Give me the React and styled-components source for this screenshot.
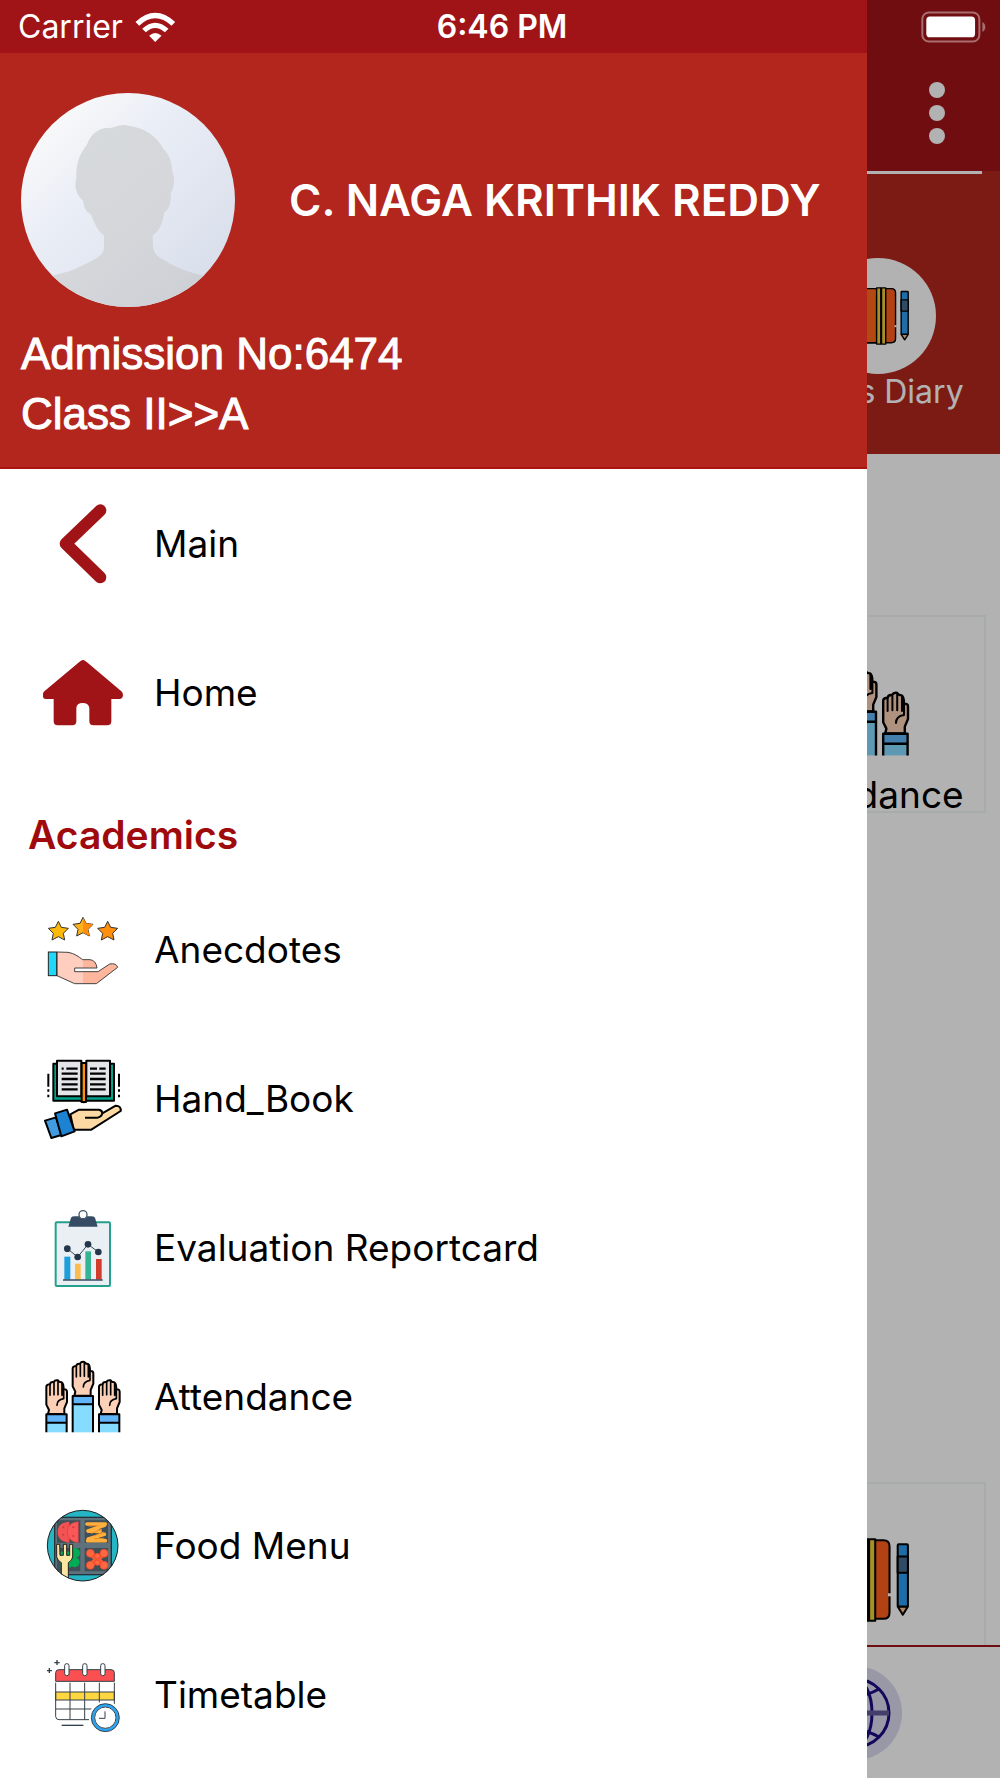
import styled, { createGlobalStyle } from "styled-components";

// every menu icon is drawn on a 240 x 240 grid
const BackIcon = () => (
    <svg viewBox="69 72 240 240" fill="none" stroke="#a01417" strokeWidth="36" strokeLinejoin="round" strokeLinecap="round">
        <path d="M241 91 L137 191 L241 292" />
    </svg>
);

const HomeIcon = () => (
    <svg viewBox="69 519 240 240" fill="#a01417">
        <path d="M189 540 C193 540 197 543 201 547 L304 634 C311 640 311 657 300 657 L274 657 L274 724 Q274 736 262 736 L220 736 Q208 736 208 724 L208 684 Q206 669 188 669 Q170 669 169 684 L169 724 Q169 736 157 736 L113 736 Q101 736 101 724 L101 657 L77 657 C66 657 66 640 73 634 L177 547 C181 543 185 540 189 540 Z" />
    </svg>
);

const Star = ({ x, y, fill }) => (
    <path
        transform={`translate(${x} ${y})`}
        d="M0 -28 L9 -10 L30 -7 L15 8 L19 28 L0 18 L-19 28 L-15 8 L-30 -7 L-9 -10 Z"
        fill={fill}
        stroke="#333"
        strokeWidth="3"
        strokeLinejoin="round"
    />
);

const AnecdotesIcon = () => (
    <svg viewBox="69 57 240 240">
        <Star x={115} y={119} fill="#fcb90a" />
        <Star x={189} y={107} fill="#fcb11c" />
        <path d="M189 79 L198 97 L219 100 L204 115 L208 135 L189 125 Z" fill="#ff8f0c" />
        <Star x={263} y={119} fill="#ff8f0c" />
        <path d="M111 183 L144 184 C163 187 174 196 188 206 L210 206 Q228 208 231 231 L164 231 L164 242 L234 242 L269 219 Q288 215 293 229 L229 278 L164 278 L111 254 Z" fill="#ffcebf" />
        <path d="M189 206 L210 206 Q228 208 231 231 L189 231 Z M189 242 L234 242 L269 219 Q288 215 293 229 L229 278 L189 278 Z" fill="#ffb69c" />
        <path d="M111 183 L144 184 C163 187 174 196 188 206 L210 206 Q228 208 231 231 L164 231 L164 242 L234 242 L269 219 Q288 215 293 229 L229 278 L164 278 L111 254 Z" fill="none" stroke="#444" strokeWidth="3" strokeLinejoin="round" />
        <rect x="85" y="183" width="25" height="71" fill="#1fd7f8" stroke="#222" strokeWidth="3" />
    </svg>
);

const HandBookIcon = () => (
    <svg viewBox="69 504 240 240" stroke="#000" strokeWidth="6" strokeLinejoin="round">
        <path d="M100 518 L282 518 L282 629 L203 629 L191 634 L179 629 L100 629 Z" fill="#00a389" />
        <rect x="111" y="509" width="73" height="107" fill="#e4e5e9" />
        <rect x="199" y="509" width="71" height="107" fill="#e4e5e9" />
        <rect x="185" y="516" width="13" height="117" fill="#ff8f0c" />
        <g fill="none" strokeWidth="7">
            <path d="M125 533 H131 M139 533 H173 M125 548 H173 M125 564 H173 M125 580 H173 M125 595 H173" />
            <path d="M210 533 H231 M238 533 H257 M210 548 H257 M210 564 H257 M210 580 H257 M210 595 H257" />
            <path d="M85 548 V587 M85 595 V602 M85 611 V619 M297 548 V587 M297 595 V602 M297 611 V619" strokeWidth="6" />
        </g>
        <path d="M151 670 L177 656 L237 656 Q247 658 247 667 L287 644 Q304 645 302 660 L214 716 L161 716 Z" fill="#ffd9a3" />
        <path d="M195 680 H232 Q244 679 247 667" fill="none" />
        <path d="M75 689 L108 679 L124 732 L94 741 Z" fill="#419be0" />
        <path d="M105 667 L141 656 L164 721 L124 736 Z" fill="#1c82d2" />
    </svg>
);

const ReportIcon = () => (
    <svg viewBox="69 51 240 240">
        <rect x="107" y="94" width="163" height="191" rx="3" fill="#eaeff3" stroke="#25a08e" strokeWidth="6" />
        <path d="M145 107 L153 80 Q156 76 164 76 L213 76 Q222 76 225 80 L233 107 Z" fill="#364c62" />
        <circle cx="189" cy="71" r="12" fill="#fff" stroke="#40566c" strokeWidth="4" />
        <rect x="133" y="197" width="18" height="69" fill="#209edb" />
        <rect x="165" y="218" width="17" height="48" fill="#fbbc4d" />
        <rect x="196" y="181" width="17" height="85" fill="#35b493" />
        <rect x="228" y="204" width="17" height="62" fill="#d23d2b" />
        <path d="M129 267 H248" stroke="#394b61" strokeWidth="4" />
        <path d="M142 173 L173 198 L204 160 L235 183" fill="none" stroke="#394b61" strokeWidth="3" />
        <g fill="#24364c">
            <circle cx="142" cy="173" r="10" />
            <circle cx="173" cy="198" r="10" />
            <circle cx="204" cy="160" r="10" />
            <circle cx="235" cy="183" r="10" />
        </g>
    </svg>
);

const RaisedHand = ({ x = 0, y = 0, arm = 54 }) => (
    <g transform={`translate(${x} ${y})`} stroke="#000" strokeWidth="6" strokeLinecap="round" strokeLinejoin="round">
        <path d="M242 672 L245 660 L237 644 L237 589 Q239 583 248 583 Q249 575 259 576 Q263 569 272 571 Q275 577 283 577 Q289 580 289 598 Q299 597 299 605 L299 636 L291 655 L291 672 Z" fill="#fbd0b6" />
        <path d="M248 585 V616 M260 578 V614 M272 574 V614 M284 580 V616 M289 598 V614 M289 614 V626 Q269 629 269 646" fill="none" strokeWidth="5" />
        <rect x="237" y="673" width="61" height={arm} fill="#86dcff" stroke="none" />
        <rect x="237" y="673" width="61" height="25" fill="#62b5f8" stroke="none" />
        <path d={`M237 ${673 + arm} V673 H298 V${673 + arm} M237 698 H298`} fill="none" strokeLinecap="butt" />
    </g>
);

const HandsIcon = () => (
    <svg viewBox="69 501 240 240">
        <RaisedHand x={-158} />
        <RaisedHand x={-79} y={-55} arm={109} />
        <RaisedHand />
    </svg>
);

const FoodIcon = () => (
    <svg viewBox="69 48 240 240">
        <clipPath id="plate">
            <circle cx="188" cy="167" r="107" />
        </clipPath>
        <g clipPath="url(#plate)">
            <circle cx="188" cy="167" r="107" fill="#25b5c5" />
            <rect x="104" y="82" width="170" height="172" fill="#5f727c" stroke="#25323a" strokeWidth="4" />
            <path d="M111 91 H181 V158 H111 Z M194 91 H264 V158 H194 Z M111 174 H181 V244 H111 Z M194 174 H264 V244 H194 Z" fill="#404f57" />
            <path d="M148 95 Q113 97 113 126 Q113 155 148 158 Z" fill="#f35252" />
            <path d="M175 95 Q142 97 142 126 Q142 155 175 158 Z" fill="#fa5757" stroke="#c94147" strokeWidth="2" />
            <g fill="#c63942">
                <circle cx="130" cy="112" r="3" />
                <circle cx="130" cy="134" r="3" />
                <circle cx="160" cy="112" r="3" />
                <circle cx="160" cy="138" r="3" />
            </g>
            <g stroke="#ffaf3c" strokeWidth="11" strokeLinecap="round">
                <path d="M201 102 L256 102 M253 106 L204 123 M205 123 L240 124 M253 133 L205 147 M203 152 L256 152" />
            </g>
            <path d="M206 108 L236 107 M214 130 L246 118 M222 138 L251 126 M222 146 L251 145" stroke="#ef8e27" strokeWidth="3" />
            <g fill="#00ad55">
                <circle cx="165" cy="189" r="15" />
                <circle cx="164" cy="217" r="15" />
                <circle cx="146" cy="202" r="13" />
                <rect x="122" y="185" width="32" height="47" />
            </g>
            <path d="M211 190 L252 226 M252 190 L211 226" stroke="#fa5a35" strokeWidth="16" />
            <g fill="#ff6740" stroke="#e7472e" strokeWidth="2">
                <circle cx="211" cy="190" r="12" />
                <circle cx="252" cy="190" r="12" />
                <circle cx="211" cy="226" r="12" />
                <circle cx="252" cy="226" r="12" />
                <circle cx="232" cy="198" r="8" />
                <circle cx="232" cy="218" r="8" />
            </g>
            <path d="M110 163 L119 163 L120 196 L130 196 L130 163 L140 163 L140 196 L149 196 L149 163 L158 163 L158 201 Q157 211 145 218 L145 280 L124 280 L124 218 Q112 211 110 201 Z" fill="#fde5a2" stroke="#222" strokeWidth="3" strokeLinejoin="round" />
        </g>
        <circle cx="188" cy="167" r="106" fill="none" stroke="#222" strokeWidth="3" />
    </svg>
);

const TimetableIcon = () => (
    <svg viewBox="69 495 240 240" fill="none" stroke="#343f48" strokeWidth="3">
        <path d="M111 510 V525 M103 518 H119 M88 534 V549 M81 542 H96" strokeWidth="4" />
        <path d="M107 574 V548 Q107 539 117 539 H273 Q283 539 283 548 V574 Z" fill="#fb4f52" />
        <rect x="107" y="606" width="176" height="24" fill="#fdd640" />
        <path d="M107 578 V680 Q108 689 117 689 H209 M283 578 V642 M150 578 V689 M194 578 V689 M238 578 V644 M107 657 H222" />
        <path d="M125 706 H190" strokeWidth="4" />
        <g fill="#fff" strokeWidth="3">
            <rect x="134" y="521" width="13" height="36" rx="6" />
            <rect x="188" y="521" width="13" height="36" rx="6" />
            <rect x="242" y="521" width="13" height="36" rx="6" />
        </g>
        <circle cx="256" cy="683" r="47" fill="#fff" stroke="#fff" strokeWidth="5" />
        <circle cx="256" cy="683" r="37" stroke="#2aa5f5" strokeWidth="9" />
        <circle cx="256" cy="683" r="42" />
        <circle cx="256" cy="683" r="32" />
        <path d="M255 664 V685 H237" />
    </svg>
);

const DiaryIcon = () => (
    <svg viewBox="0 0 94 94" stroke="#000" strokeWidth="2" strokeLinejoin="round">
        <path d="M8 8 H66 Q72 8 72 14 V79 Q72 85 66 85 H8 Z" fill="#ff5f1c" />
        <path d="M8 8 H45 V85 H8 Z" fill="#ff691c" stroke="none" />
        <path d="M8 8 H45 M8 85 H45" />
        <rect x="45" y="7" width="6" height="80" fill="#f0cf3d" />
        <rect x="52" y="7" width="6" height="80" fill="#f0cf3d" />
        <path d="M72 60 V63" stroke="#fff" strokeWidth="3" />
        <path d="M80 73 L85 81 L90 73 Z" fill="#ffc194" />
        <rect x="80" y="12" width="10" height="61" rx="1" fill="#2b9bf1" />
        <rect x="80" y="24" width="10" height="16" fill="#466e90" />
    </svg>
);

const GlobeIcon = () => (
    <svg viewBox="0 0 94 94" fill="none" stroke="#1d0b83" strokeWidth="3">
        <circle cx="47" cy="47" r="47" fill="#dadaf0" stroke="none" />
        <circle cx="47" cy="47" r="34" />
        <ellipse cx="47" cy="47" rx="17" ry="34" />
        <path d="M47 13 V81" />
        <path d="M13 47 H81" stroke="#625a9d" strokeWidth="5" />
        <path d="M23 23 Q47 37 71 23 M23 71 Q47 57 71 71" />
    </svg>
);

const WifiIcon = () => (
    <svg viewBox="398 36 122 90" width="41" height="30" fill="#fff">
        <path d="M399 66 Q458 11 518 66 L507 77 Q458 33 410 77 Z" />
        <path d="M419 86 Q458 50 498 86 L487 97 Q458 71 430 97 Z" />
        <path d="M440 107 Q458 91 477 107 L458 126 Z" />
    </svg>
);

const BatteryIcon = () => (
    <svg viewBox="1322 30 196 96" width="65" height="32">
        <rect x="1326" y="34" width="172" height="88" rx="20" fill="none" stroke="#fff" strokeOpacity=".4" strokeWidth="6" />
        <rect x="1338" y="46" width="147" height="63" rx="11" fill="#fff" />
        <path d="M1507 63 Q1516 68 1516 78 Q1516 88 1507 93 Z" fill="#fff" fillOpacity=".4" />
    </svg>
);

const AvatarImage = () => (
    <svg viewBox="63 279 642 642" width="214" height="214">
        <defs>
            <linearGradient id="avatarBg" x1="0" y1="0" x2="1" y2="1">
                <stop offset=".1" stopColor="#fafafa" />
                <stop offset=".4" stopColor="#e9edf6" />
                <stop offset=".9" stopColor="#d8deea" />
            </linearGradient>
            <linearGradient id="avatarPerson" x1="0" y1="0" x2="1" y2="1">
                <stop offset="0" stopColor="#d7dbdb" />
                <stop offset=".5" stopColor="#d5d7db" />
                <stop offset="1" stopColor="#cacdd3" />
            </linearGradient>
            <clipPath id="avatarClip">
                <circle cx="384" cy="600" r="321" />
            </clipPath>
        </defs>
        <g clipPath="url(#avatarClip)">
            <rect x="63" y="279" width="642" height="642" fill="url(#avatarBg)" />
            <path
                d="M150 828 C210 818 248 798 289 775 Q313 762 312 740 L312 706 C287 690 278 650 271 641 C254 636 252 615 248 601 C230 586 221 558 229 537 C227 492 239 460 261 434 C271 403 296 382 328 384 C350 383 360 371 385 377 C430 382 471 407 490 447 C510 465 516 490 517 515 C528 543 520 566 513 577 C513 606 508 630 493 637 C488 672 476 697 458 705 L459 742 Q462 764 481 774 C522 800 561 818 620 828 L720 921 L63 921 Z"
                fill="url(#avatarPerson)"
            />
        </g>
    </svg>
);

const mainLinks = [
    { title: "Main", icon: <BackIcon /> },
    { title: "Home", icon: <HomeIcon /> },
];

const academicLinks = [
    { title: "Anecdotes", icon: <AnecdotesIcon /> },
    { title: "Hand_Book", icon: <HandBookIcon /> },
    { title: "Evaluation Reportcard", icon: <ReportIcon /> },
    { title: "Attendance", icon: <HandsIcon /> },
    { title: "Food Menu", icon: <FoodIcon /> },
    { title: "Timetable", icon: <TimetableIcon /> },
];

const MenuList = ({ links }) => (
    <Menu>
        {links.map(({ title, icon }) => (
            <li key={title}>
                <MenuLink href="#">
                    {icon}
                    {title}
                </MenuLink>
            </li>
        ))}
    </Menu>
);

export default function App() {
    return (
        <Screen>
            <GlobalStyle />

            <Page>
                <AppBar>
                    <MoreButton aria-label="More">
                        <span />
                        <span />
                        <span />
                    </MoreButton>
                </AppBar>
                <Hero>
                    <HeroLink href="#">
                        <Circle>
                            <DiaryIcon />
                        </Circle>
                        Class Diary
                    </HeroLink>
                </Hero>
                <Cards>
                    <Card href="#" $row={1}>
                        <HandsIcon />
                        Attendance
                    </Card>
                    <Card href="#" $row={4} aria-label="Diary">
                        <DiaryIcon />
                    </Card>
                </Cards>
                <TabBar>
                    <TabButton aria-label="Website">
                        <GlobeIcon />
                    </TabButton>
                </TabBar>
            </Page>

            <Overlay />

            <Drawer>
                <Profile>
                    <ProfileTop>
                        <AvatarImage />
                        <ProfileName>C. NAGA KRITHIK REDDY</ProfileName>
                    </ProfileTop>
                    <ProfileInfo>Admission No:6474</ProfileInfo>
                    <ProfileInfo>Class II&gt;&gt;A</ProfileInfo>
                </Profile>
                <nav>
                    <MenuList links={mainLinks} />
                    <SectionTitle>Academics</SectionTitle>
                    <MenuList links={academicLinks} />
                </nav>
            </Drawer>

            <StatusBar>
                <Carrier>
                    Carrier
                    <WifiIcon />
                </Carrier>
                <Clock>6:46 PM</Clock>
                <Battery>
                    <BatteryIcon />
                </Battery>
            </StatusBar>
        </Screen>
    );
}

const GlobalStyle = createGlobalStyle`
    * {
        box-sizing: border-box;
    }

    body {
        margin: 0;
        font-family: Inter, "Liberation Sans", sans-serif;
    }

    button {
        border: none;
        padding: 0;
        background: none;
    }

    a {
        color: inherit;
        text-decoration: none;
    }

    svg {
        display: block;
        flex-shrink: 0;
    }
`;

const Screen = styled.div`
    position: relative;
    height: 100vh;
    overflow: hidden;
`;

const StatusBar = styled.div`
    position: absolute;
    top: 0;
    left: 0;
    right: 0;
    height: 53px;
    padding: 0 14px 0 18px;
    display: grid;
    grid-template-columns: 1fr auto 1fr;
    align-items: center;
    color: #fff;
    font-size: 32px;
`;

const Carrier = styled.div`
    display: flex;
    align-items: center;
    gap: 12px;
`;

const Clock = styled.div`
    font-weight: 600;
`;

const Battery = styled.div`
    justify-self: end;
`;

const Page = styled.div`
    height: 100%;
    display: flex;
    flex-direction: column;
    background-color: #fff;
`;

const AppBar = styled.header`
    height: 171px;
    padding: 82px 55px 0 0;
    display: flex;
    justify-content: flex-end;
    align-items: flex-start;
    background-color: #a01417;
`;

const MoreButton = styled.button`
    display: flex;
    flex-direction: column;
    gap: 7px;

    span {
        width: 16px;
        height: 16px;
        border-radius: 50%;
        background-color: #fff;
    }
`;

const Hero = styled.section`
    height: 283px;
    padding: 87px 20px 0 0;
    display: flex;
    justify-content: flex-end;
    color: #fff;
    background: linear-gradient(#fff, #fff) 0 0 / calc(100% - 18px) 3px no-repeat #b2261d;
`;

const HeroLink = styled.a`
    width: 204px;
    display: flex;
    flex-direction: column;
    align-items: center;
    font-size: 32px;
    line-height: 36px;
`;

const Circle = styled.div`
    width: 116px;
    height: 116px;
    display: grid;
    place-items: center;
    border-radius: 50%;
    background-color: #fff;

    svg {
        width: 66px;
    }
`;

const Cards = styled.main`
    flex: 1;
    min-height: 0;
    overflow: hidden;
    padding: 161px 14px 0;
    display: grid;
    grid-template-columns: repeat(3, 1fr);
    grid-auto-rows: 198px;
    gap: 91px 120px;
`;

const Card = styled.a`
    grid-column: 3;
    grid-row: ${({ $row }) => $row};
    padding-top: 48px;
    display: flex;
    flex-direction: column;
    align-items: center;
    gap: 16px;
    border: 2px solid #f0f6f5;
    font-size: 37px;
    line-height: 36px;

    svg {
        width: 96px;
    }
`;

const TabBar = styled.footer`
    height: 133px;
    padding-right: 98px;
    display: flex;
    align-items: center;
    justify-content: flex-end;
    border-top: 2px solid #a01417;
    background-color: #fff;
`;

const TabButton = styled.button`
    svg {
        width: 94px;
    }
`;

const Overlay = styled.div`
    position: absolute;
    inset: 0;
    background-color: rgba(0, 0, 0, .3);
`;

const Drawer = styled.aside`
    position: absolute;
    top: 0;
    bottom: 0;
    left: 0;
    width: 86.7%;
    overflow: hidden;
    background-color: #fff;
    border-top: 53px solid #a01417;
`;

const Profile = styled.div`
    height: 416px;
    padding: 40px 21px 0;
    color: #fff;
    background-color: #b2261d;
    border-bottom: 2px solid #ac130f;
`;

const ProfileTop = styled.div`
    display: flex;
    align-items: center;
    gap: 54px;
    margin-bottom: 17px;
`;

const ProfileName = styled.h1`
    margin: 0;
    font-size: 44px;
    font-weight: 600;
    white-space: nowrap;
`;

const ProfileInfo = styled.p`
    margin: 0;
    font-family: "Liberation Sans", Arial, sans-serif;
    font-size: 44px;
    line-height: 60px;
    -webkit-text-stroke: 1px #fff;
`;

const Menu = styled.ul`
    margin: 0;
    padding: 0;
    list-style: none;
`;

const MenuLink = styled.a`
    height: 149px;
    padding-left: 43px;
    display: flex;
    align-items: center;
    gap: 31px;
    color: #000;
    font-size: 37px;

    svg {
        width: 80px;
        height: 80px;
    }
`;

const SectionTitle = styled.h2`
    margin: 0;
    padding: 44px 28px 16px;
    color: #9f0a0d;
    font-size: 39px;
    font-weight: 600;
    line-height: 48px;
`;
